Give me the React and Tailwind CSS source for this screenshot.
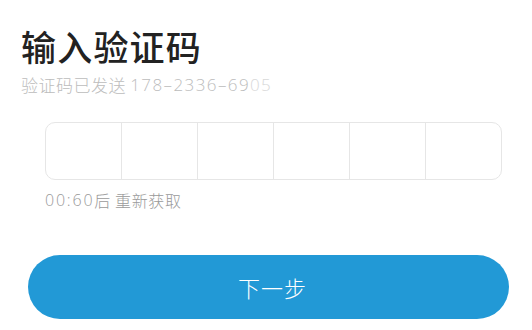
export default function App() {
  const cells = [0, 1, 2, 3, 4, 5];
  const latin = { fontFamily: '"Open Sans", "Liberation Sans", sans-serif' };
  return (
    <div
      className="w-[532px] h-[330px] bg-white overflow-hidden"
      style={{ fontFamily: '"Noto Sans CJK SC", "Noto Sans", sans-serif' }}
    >
      <div className="pl-[21px] pt-[24px]">
        <h1 className="h-[44px] text-[35px] leading-[44px] font-medium text-[#222] tracking-[1.2px]">输入验证码</h1>
        <p className="mt-[6px] h-[22px] flex items-center whitespace-pre text-[17px] text-[#bcbcbc] font-light">
          <span className="tracking-[0.5px]">验证码已发送 </span>
          <span className="tracking-[1.4px]" style={latin}>178–2336–69</span>
          <span className="tracking-[1.4px] text-[#d8d8d8]" style={latin}>05</span>
        </p>
      </div>
      <div className="pl-[45px] pr-[30px] mt-[26px]">
        <div className="flex h-[58px] border border-[#e6e6e6] rounded-[10px] overflow-hidden">
          {cells.map((i) => (
            <div
              key={i}
              className={`flex-1 ${i < 5 ? 'border-r border-[#e6e6e6]' : ''}`}
            />
          ))}
        </div>
        <p className="mt-[10px] h-[20px] flex items-center whitespace-pre text-[16px] text-[#9a9a9a] font-light">
          <span className="tracking-[1.8px]" style={latin}>00:60</span>
          <span className="tracking-[0.6px]">后 重新获取</span>
        </p>
      </div>
      <div className="pl-[28px] pr-[23px] mt-[45px]">
        <button
          type="button"
          className="w-full h-[64px] pl-[8px] rounded-full bg-[#2299d6] text-white text-[22px] font-light tracking-[1px]"
        >
          下一步
        </button>
      </div>
    </div>
  );
}
